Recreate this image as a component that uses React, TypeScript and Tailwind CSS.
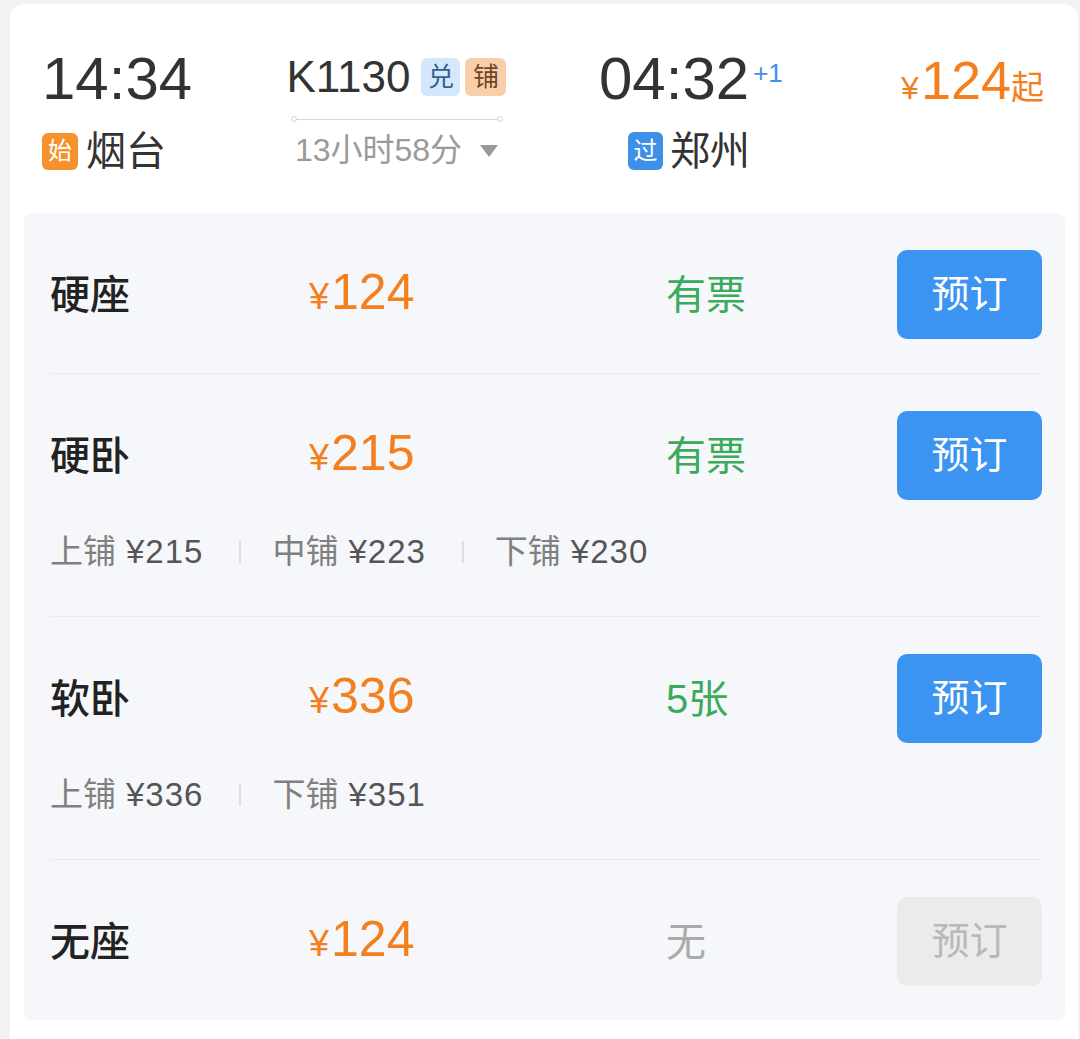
import React from "react";

type Berth = { label: string; price: string };

interface SeatRow {
  name: string;
  price: string;
  status: string;
  available: boolean;
  berths?: Berth[];
}

const seats: SeatRow[] = [
  { name: "硬座", price: "124", status: "有票", available: true },
  {
    name: "硬卧",
    price: "215",
    status: "有票",
    available: true,
    berths: [
      { label: "上铺", price: "215" },
      { label: "中铺", price: "223" },
      { label: "下铺", price: "230" },
    ],
  },
  {
    name: "软卧",
    price: "336",
    status: "5张",
    available: true,
    berths: [
      { label: "上铺", price: "336" },
      { label: "下铺", price: "351" },
    ],
  },
  { name: "无座", price: "124", status: "无", available: false },
];

function Tag({ text, className }: { text: string; className: string }) {
  return (
    <span className={`flex items-center justify-center rounded-[6px] text-[24px] leading-none ${className}`}>
      {text}
    </span>
  );
}

function Header() {
  return (
    <div className="flex h-[209px] items-start pl-[28px] pr-[34px] pt-[45px]">
      {/* departure */}
      <div className="flex w-[247px] shrink-0 flex-col">
        <span className="ml-[4px] text-[60px] leading-[60px] text-[#333]">14:34</span>
        <div className="mt-[23px] flex h-[38px] items-center">
          <Tag text="始" className="ml-[4px] h-[37px] w-[36px] bg-[#f6922b] text-white" />
          <span className="ml-[8px] text-[40px] leading-[38px] text-[#333]">烟台</span>
        </div>
      </div>

      {/* train number + duration */}
      <div className="flex w-[223px] shrink-0 flex-col items-center">
        <div className="mt-[6px] flex h-[44px] items-center">
          <span className="text-[44px] leading-[44px] text-[#333]">K1130</span>
          <Tag text="兑" className="ml-[11px] h-[38px] w-[39px] bg-[#d5e7fb] text-[26px] text-[#35608f]" />
          <Tag text="铺" className="ml-[5px] h-[38px] w-[41px] bg-[#f9cfaa] text-[26px] text-[#6d4728]" />
        </div>
        <div className="mt-[17px] flex w-[212px] items-center">
          <span className="h-[6px] w-[6px] rounded-full border border-[#d4d4d4] bg-white" />
          <span className="h-px flex-1 bg-[#d8d8d8]" />
          <span className="h-[6px] w-[6px] rounded-full border border-[#d4d4d4] bg-white" />
        </div>
        <div className="mt-[13px] flex items-center">
          <span className="text-[32px] leading-[31px] text-[#9a9a9a]">13小时58分</span>
          <svg className="ml-[18px]" width="18" height="12" viewBox="0 0 18 12">
            <polygon points="0,0 18,0 9,12" fill="#999" />
          </svg>
        </div>
      </div>

      {/* arrival */}
      <div className="ml-[91px] flex flex-col">
        <div className="flex items-start">
          <span className="text-[60px] leading-[60px] text-[#333]">04:32</span>
          <span className="ml-[4px] mt-[11px] text-[26px] leading-[26px] text-[#3f8fe9]">+1</span>
        </div>
        <div className="ml-[29px] mt-[23px] flex h-[38px] items-center">
          <Tag text="过" className="h-[38px] w-[35px] bg-[#3d8fe8] text-white" />
          <span className="ml-[7px] text-[40px] leading-[38px] text-[#333]">郑州</span>
        </div>
      </div>

      {/* lowest price */}
      <div className="ml-auto mt-[1px] flex items-baseline leading-[60px] text-[#f37f1f]">
        <span className="text-[32px]">¥</span>
        <span className="ml-[2px] text-[54px]">124</span>
        <span className="text-[33px]">起</span>
      </div>
    </div>
  );
}

function Seat({ row }: { row: SeatRow }) {
  return (
    <div className="border-t border-[#e9ebee] pb-[34px] pt-[37px] first:border-t-0">
      <div className="grid h-[89px] grid-cols-[259px_357px_1fr_145px] items-center">
        <span className="text-[40px] leading-[40px] font-medium text-[#222]">{row.name}</span>
        <span className="flex items-baseline text-[#f37f1f]">
          <span className="text-[36px] leading-[50px]">¥</span>
          <span className="ml-[2px] text-[50px] leading-[50px]">{row.price}</span>
        </span>
        <span className={`text-[40px] leading-[40px] ${row.available ? "text-[#3bab5b]" : "text-[#aaa]"}`}>
          {row.status}
        </span>
        <button
          className={`flex h-[89px] w-[145px] items-center justify-center rounded-[10px] text-[38px] ${
            row.available ? "bg-[#3b94f1] text-white" : "bg-[#ebebeb] text-[#b8b8b8]"
          }`}
        >
          预订
        </button>
      </div>
      {row.berths && (
        <div className="mb-[14px] mt-[36px] flex h-[32px] items-center text-[33px] leading-[32px]">
          {row.berths.map((b, i) => (
            <React.Fragment key={b.label}>
              {i > 0 && <span className="ml-[36px] mr-[31px] h-[22px] w-[2px] bg-[#dedede]" />}
              <span className="flex items-center">
                <span className="text-[#808080]">{b.label}</span>
                <span className="ml-[10px] tracking-[1px] text-[#555]">¥{b.price}</span>
              </span>
            </React.Fragment>
          ))}
        </div>
      )}
    </div>
  );
}

export default function App() {
  return (
    <div className="min-h-screen bg-[#f2f2f2] pl-[10px] pt-[4px] font-['Liberation_Sans','Noto_Sans_CJK_SC',sans-serif]">
      <div className="w-[1068px] rounded-[14px] bg-white pb-[40px]">
        <Header />
        <div className="ml-[14px] w-[1041px] rounded-[8px] bg-[#f5f7fa] pl-[26px] pr-[23px]">
          {seats.map((s) => (
            <Seat key={s.name} row={s} />
          ))}
        </div>
      </div>
    </div>
  );
}
